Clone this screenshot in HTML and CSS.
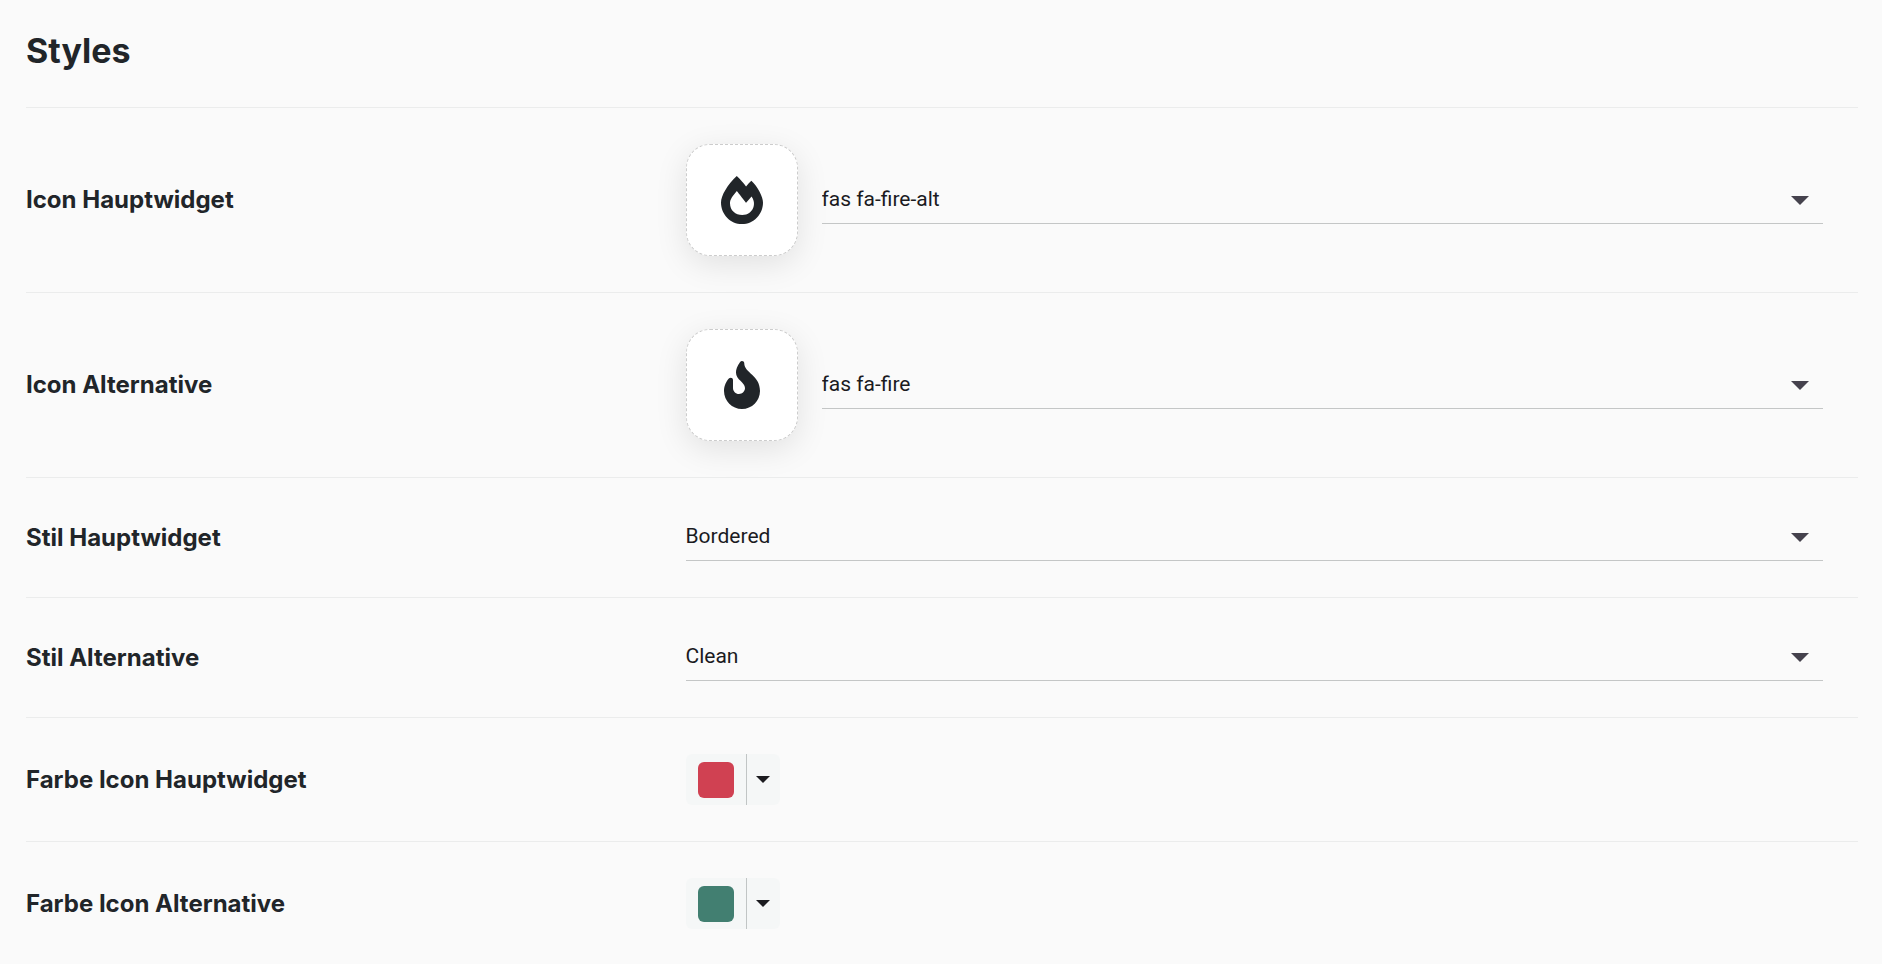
FILE: index.html
```html
<!DOCTYPE html>
<html lang="de">
<head>
    <meta charset="utf-8">
    <meta name="viewport" content="width=device-width, initial-scale=1.0">
    <title>Styles</title>
    <link rel="stylesheet" href="styles.css">
</head>
<body>
<main class="settings">
    <h1>Styles</h1>

    <div class="row">
        <label class="row-label" for="icon-haupt">Icon Hauptwidget</label>
        <div class="row-field">
            <div class="icon-box">
                <svg viewBox="0 0 448 512" aria-hidden="true"><path d="M323.56 51.2c-20.8 19.3-39.58 39.59-56.22 59.97C240.08 73.62 206.28 35.53 168 0 69.74 91.17 0 209.96 0 281.6 0 408.85 100.29 512 224 512s224-103.15 224-230.4c0-53.27-51.98-163.14-124.44-230.4zm-19.47 340.65C282.43 407.01 255.72 416 226.86 416 154.71 416 96 368.26 96 290.75c0-38.61 24.31-72.63 72.79-130.75 6.93 7.98 98.83 125.34 98.83 125.34l58.63-66.88c4.14 6.85 7.91 13.55 11.27 19.97 27.35 52.19 15.81 118.97-33.43 153.42z"/></svg>
            </div>
            <div class="select">
                <select id="icon-haupt">
                    <option>fas fa-fire-alt</option>
                </select>
            </div>
        </div>
    </div>

    <div class="row">
        <label class="row-label" for="icon-alt">Icon Alternative</label>
        <div class="row-field">
            <div class="icon-box">
                <svg viewBox="0 0 384 512" aria-hidden="true"><path d="M216 23.86c0-23.8-30.65-32.77-44.15-13.04C48 191.85 224 200 224 288c0 35.63-29.11 64.46-64.85 63.99-35.17-.45-63.15-29.77-63.15-64.94v-85.51c0-21.7-26.47-32.23-41.43-16.5C27.8 213.16 0 261.33 0 320c0 105.87 86.13 192 192 192s192-86.13 192-192c0-170.29-168-193-168-296.14z"/></svg>
            </div>
            <div class="select">
                <select id="icon-alt">
                    <option>fas fa-fire</option>
                </select>
            </div>
        </div>
    </div>

    <div class="row">
        <label class="row-label" for="stil-haupt">Stil Hauptwidget</label>
        <div class="row-field">
            <div class="select">
                <select id="stil-haupt">
                    <option selected>Bordered</option>
                    <option>Clean</option>
                </select>
            </div>
        </div>
    </div>

    <div class="row">
        <label class="row-label" for="stil-alt">Stil Alternative</label>
        <div class="row-field">
            <div class="select">
                <select id="stil-alt">
                    <option>Bordered</option>
                    <option selected>Clean</option>
                </select>
            </div>
        </div>
    </div>

    <div class="row">
        <label class="row-label" for="farbe-haupt">Farbe Icon Hauptwidget</label>
        <div class="row-field">
            <div class="color-picker">
                <input type="color" id="farbe-haupt" value="#d04152">
                <button type="button" class="color-toggle" aria-label="Farbe wählen"></button>
            </div>
        </div>
    </div>

    <div class="row">
        <label class="row-label" for="farbe-alt">Farbe Icon Alternative</label>
        <div class="row-field">
            <div class="color-picker">
                <input type="color" id="farbe-alt" value="#427f71">
                <button type="button" class="color-toggle" aria-label="Farbe wählen"></button>
            </div>
        </div>
    </div>
</main>
</body>
</html>
```
FILE: styles.css
```css
* {
    box-sizing: border-box;
}
body {
    margin: 0;
    background: #fafafa;
    color: #212529;
    font-family: Inter, sans-serif;
}
.settings {
    padding: 29px 24px 0 26px;
}
h1 {
    margin: 0 0 34px;
    font-size: 34px;
    line-height: 44px;
    font-weight: 700;
}

/* rows */
.row {
    display: flex;
    align-items: center;
    padding: 36px 0;
    border-top: 1px solid #ebecec;
}
.row:last-child {
    padding-bottom: 0;
}
.row-label {
    width: 36%;
    font-size: 24px;
    line-height: 32px;
    font-weight: 700;
}
.row-field {
    flex: 1;
    display: flex;
    align-items: center;
    gap: 24px;
    padding-right: 35px;
}

/* icon preview */
.icon-box {
    display: flex;
    align-items: center;
    justify-content: center;
    width: 112px;
    height: 112px;
    background: #fff;
    border: 1px dashed #ccc;
    border-radius: 24px;
    box-shadow: 0 8px 32px rgba(0, 0, 0, .1);
}
.icon-box svg {
    height: 48px;
    fill: #212529;
}

/* dropdown, the arrow shares the grid cell with the select */
.select {
    flex: 1;
    display: grid;
    align-items: center;
}
.select select {
    grid-area: 1 / 1;
    width: 100%;
    height: 47px;
    padding: 0 40px 2px 0;
    appearance: none;
    background: none;
    border: none;
    border-bottom: 1px solid #c4c6c6;
    border-radius: 0;
    color: #1b1b1f;
    font-family: Roboto, sans-serif;
    font-size: 21px;
}
.select::after {
    content: "";
    grid-area: 1 / 1;
    justify-self: end;
    margin-right: 14px;
    border: solid transparent;
    border-width: 9px 9px 0;
    border-top-color: #45424d;
    pointer-events: none;
}

/* color picker */
.color-picker {
    display: flex;
    height: 51px;
    background: #f5f7f7;
    border-radius: 6px;
    overflow: hidden;
}
.color-picker input {
    width: 60px;
    height: 100%;
    padding: 0 12px;
    appearance: none;
    background: none;
    border: none;
}
.color-picker input::-webkit-color-swatch-wrapper {
    display: flex;
    align-items: center;
    padding: 0;
}
.color-picker input::-webkit-color-swatch {
    height: 36px;
    border: none;
    border-radius: 6px;
}
.color-toggle {
    display: flex;
    align-items: center;
    justify-content: center;
    width: 34px;
    padding: 0;
    background: none;
    border: none;
    border-left: 1px solid #c1c5c5;
}
.color-toggle::after {
    content: "";
    border: solid transparent;
    border-width: 7px 7px 0;
    border-top-color: #1b1b1f;
}
```
